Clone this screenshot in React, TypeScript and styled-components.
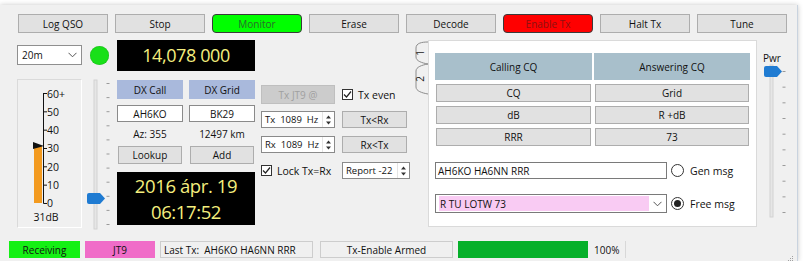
import React from "react";
import styled, { createGlobalStyle } from "styled-components";

const GlobalStyle = createGlobalStyle`
  html, body { margin: 0; padding: 0; background: #ffffff; }
  body {
    font-family: "Open Sans", "Noto Sans", sans-serif;
    font-size: 10px;
    color: #111;
  }
  * { box-sizing: border-box; }
`;

const Window = styled.div`
  position: relative;
  margin-top: 5px;
  width: 798px;
  height: 256px;
  background: #f0f0f0;
  border-right: 1px solid #c9d3df;
  box-shadow: 0 0 5px rgba(0, 0, 0, 0.22);
  display: flex;
  flex-direction: column;
`;

const Toolbar = styled.div`
  display: flex;
  gap: 7px;
  padding: 9px 0 0 18px;
`;

type Tone = "green" | "red";

const PushButton = styled.div<{ $tone?: Tone; $w?: number; $h?: number }>`
  width: ${(p) => p.$w ?? 90}px;
  height: ${(p) => p.$h ?? 19}px;
  display: flex;
  align-items: center;
  justify-content: center;
  background: ${(p) =>
    p.$tone === "green" ? "#00ff00" : p.$tone === "red" ? "#ff0000" : "#e1e1e1"};
  color: ${(p) =>
    p.$tone === "green" ? "#2b6b2b" : p.$tone === "red" ? "#8e1010" : "#111"};
  border: 1px solid ${(p) => (p.$tone ? "#3a3a3a" : "#adadad")};
  border-radius: ${(p) => (p.$tone ? "4px" : "0")};
  white-space: nowrap;
`;

const DisabledButton = styled(PushButton)`
  background: #cccccc;
  border-color: #bfbfbf;
  color: #a0a0a0;
`;

const Main = styled.div`
  display: flex;
  margin-top: 7px;
  height: 190px;
`;

/* left: band + meter */
const ColA = styled.div`
  margin-left: 17px;
  width: 93px;
  display: flex;
  flex-direction: column;
`;

const TopRow = styled.div`
  display: flex;
  align-items: center;
  gap: 8px;
  margin-top: 5px;
  height: 20px;
`;

const Combo = styled.div<{ $w: number; $h: number; $edge?: string }>`
  width: ${(p) => p.$w}px;
  height: ${(p) => p.$h}px;
  display: flex;
  align-items: center;
  background: #fff;
  border: 1px solid ${(p) => p.$edge ?? "#8f8f8f"};
  padding-left: 3px;
`;

const ComboText = styled.div<{ $bg?: string }>`
  flex: 1;
  align-self: stretch;
  display: flex;
  align-items: center;
  padding-left: 1px;
  margin: 1px 0;
  background: ${(p) => p.$bg ?? "transparent"};
`;

const ComboArrow = styled.div`
  width: 17px;
  display: flex;
  align-items: center;
  justify-content: center;
`;

const Led = styled.div`
  width: 19px;
  height: 19px;
  border-radius: 50%;
  background: #19e019;
  box-shadow: inset 0 0 1px #0a8a0a;
`;

const MeterRow = styled.div`
  display: flex;
  margin-top: 14px;
`;

const MeterBox = styled.div`
  width: 65px;
  height: 149px;
  border: 1px solid #dadada;
  border-right-color: #ffffff;
  border-bottom-color: #ffffff;
`;

/* DX column */
const ColB = styled.div`
  margin-left: 7px;
  width: 138px;
  display: flex;
  flex-direction: column;
`;

const Lcd = styled.div<{ $h: number; $size: number; $lh: number; $mt?: number }>`
  height: ${(p) => p.$h}px;
  margin-top: ${(p) => p.$mt ?? 0}px;
  background: #000;
  color: #f4ee7e;
  font-size: ${(p) => p.$size}px;
  letter-spacing: -0.4px;
  line-height: ${(p) => p.$lh}px;
  display: flex;
  flex-direction: column;
  align-items: center;
  justify-content: center;
`;

const PairRow = styled.div<{ $mt: number; $h: number }>`
  display: grid;
  grid-template-columns: 66px 66px;
  column-gap: 6px;
  margin-top: ${(p) => p.$mt}px;
  height: ${(p) => p.$h}px;
`;

const DxLabel = styled.div`
  background: #a9b9dc;
  display: flex;
  align-items: center;
  justify-content: center;
`;

const DxInput = styled.div`
  background: #fff;
  border: 1px solid #8a8a8a;
  display: flex;
  align-items: center;
  justify-content: center;
`;

const InfoText = styled.div`
  display: flex;
  align-items: center;
  justify-content: center;
`;

const ButtonPair = styled.div`
  display: flex;
  gap: 8px;
  padding-left: 1px;
`;

/* middle controls */
const ColC = styled.div`
  margin-left: 5px;
  width: 150px;
  padding: 45px 0 0 1px;
  display: flex;
  flex-direction: column;
`;

const CtlRow = styled.div<{ $mt: number }>`
  display: grid;
  grid-template-columns: 74px auto;
  column-gap: 7px;
  align-items: center;
  margin-top: ${(p) => p.$mt}px;
`;

const Check = styled.div`
  display: flex;
  align-items: center;
  gap: 5px;
  white-space: nowrap;
  font-size: 10.5px;
`;

const CheckBox = styled.div`
  width: 11px;
  height: 11px;
  background: #fff;
  border: 1px solid #333;
  display: flex;
  align-items: center;
  justify-content: center;
`;

const Spin = styled.div<{ $w: number; $h: number }>`
  width: ${(p) => p.$w}px;
  height: ${(p) => p.$h}px;
  background: #fff;
  border: 1px solid #8a8a8a;
  display: flex;
  align-items: center;
`;

const SpinText = styled.div`
  flex: 1;
  padding-left: 3px;
  font-size: 9.5px;
  white-space: pre;
`;

const SpinArrows = styled.div`
  width: 12px;
  height: 100%;
  display: flex;
  align-items: center;
  justify-content: center;
  border-left: 1px solid #e4e4e4;
`;

/* tab widget */
const TabStrip = styled.div`
  margin-left: 3px;
  width: 15px;
  padding-top: 1px;
`;

const Panel = styled.div`
  width: 329px;
  height: 187px;
  background: #fff;
  border: 1px solid #dadada;
  padding: 12px 0 0 6px;
`;

const MsgGrid = styled.div`
  display: grid;
  grid-template-columns: 157px 156px;
  column-gap: 2px;
  row-gap: 4px;
  grid-template-rows: 27px 18px 18px 18px;
`;

const MsgHeader = styled.div`
  background: #a8bfcb;
  display: flex;
  align-items: center;
  justify-content: center;
`;

const MsgButton = styled(PushButton)`
  width: auto;
  height: auto;
  margin: 0 1px;
`;

const FieldRow = styled.div<{ $mt: number }>`
  display: flex;
  align-items: center;
  margin-top: ${(p) => p.$mt}px;
`;

const LineEdit = styled.div`
  width: 232px;
  height: 17px;
  background: #fff;
  border: 1px solid #7a7a7a;
  display: flex;
  align-items: center;
  padding-left: 2px;
`;

const Radio = styled.div`
  margin-left: 4px;
  display: flex;
  align-items: center;
  gap: 6px;
  font-size: 10.5px;
`;

const RadioCircle = styled.div<{ $on?: boolean }>`
  width: 13px;
  height: 13px;
  border-radius: 50%;
  border: 1px solid #333;
  background: #fff;
  display: flex;
  align-items: center;
  justify-content: center;
  &::after {
    content: "";
    display: ${(p) => (p.$on ? "block" : "none")};
    width: 7px;
    height: 7px;
    border-radius: 50%;
    background: #222;
  }
`;

const PwrCol = styled.div`
  margin-left: 1px;
  width: 38px;
  display: flex;
  flex-direction: column;
`;

const PwrLabel = styled.div`
  margin: 11px 0 0 5px;
  height: 13px;
`;

/* status bar */
const StatusBar = styled.div`
  display: flex;
  align-items: stretch;
  margin-top: 11px;
  height: 17px;
  padding-left: 9px;
`;

const StatusCell = styled.div<{
  $w: number;
  $bg?: string;
  $ml?: number;
  $framed?: boolean;
  $left?: boolean;
}>`
  width: ${(p) => p.$w}px;
  margin-left: ${(p) => p.$ml ?? 0}px;
  background: ${(p) => p.$bg ?? "transparent"};
  border: ${(p) => (p.$framed ? "1px solid #cdcdcd" : "none")};
  display: flex;
  align-items: center;
  justify-content: ${(p) => (p.$left ? "flex-start" : "center")};
  padding-left: ${(p) => (p.$left ? "3px" : "0")};
  white-space: pre;
`;

const Separator = styled.div`
  width: 1px;
  margin-left: 4px;
  background: #d8d8d8;
`;

const SizeGrip = styled.div`
  position: absolute;
  right: 3px;
  bottom: 2px;
  width: 8px;
  height: 8px;
`;

const Chevron = () => (
  <svg width="9" height="6" viewBox="0 0 9 6">
    <polyline points="0.5,0.8 4.5,4.8 8.5,0.8" fill="none" stroke="#555" strokeWidth="1" />
  </svg>
);

const Tick = () => (
  <svg width="9" height="9" viewBox="0 0 9 9">
    <polyline points="1,4.5 3.5,7 8,1.5" fill="none" stroke="#222" strokeWidth="1.2" />
  </svg>
);

const SpinIcon = () => (
  <svg width="7" height="12" viewBox="0 0 7 12">
    <polygon points="3.5,1.5 6,4.5 1,4.5" fill="#333" />
    <polygon points="1,7.5 6,7.5 3.5,10.5" fill="#333" />
  </svg>
);

type SliderProps = {
  height: number;
  width: number;
  grooveX: number;
  ticks: number;
  tickTop: number;
  tickStep: number;
  thumbY: number;
  thumbX: number;
};

const VSlider = ({ height, width, grooveX, ticks, tickTop, tickStep, thumbY, thumbX }: SliderProps) => {
  const tickX = grooveX + 11;
  return (
    <svg width={width} height={height} viewBox={`0 0 ${width} ${height}`}>
      <rect x={grooveX - 1.5} y={1} width={3} height={height - 2} fill="#e6e6e6" stroke="#d2d2d2" strokeWidth="1" />
      {Array.from({ length: ticks }).map((_, i) => (
        <line
          key={i}
          x1={tickX}
          x2={tickX + 3}
          y1={tickTop + i * tickStep}
          y2={tickTop + i * tickStep}
          stroke="#9a9a9a"
          strokeWidth="1"
        />
      ))}
      <path
        d={`M${thumbX + 2},${thumbY} h11 l5,5.5 l-5,5.5 h-11 q-2,0 -2,-2 v-7 q0,-2 2,-2 z`}
        fill="#1f7bd2"
      />
    </svg>
  );
};

const Meter = () => {
  const labels = ["60+", "50", "40", "30", "20", "10", "0"];
  const top = 13;
  const step = 18.33;
  return (
    <svg width="63" height="147" viewBox="0 0 63 147">
      <rect x="16" y="66" width="8" height="57" fill="#f39a1f" />
      <line x1="25.5" y1={top} x2="25.5" y2="123.5" stroke="#111" strokeWidth="1" />
      {labels.map((l, i) => (
        <g key={l}>
          <line x1="25.5" x2="29" y1={top + i * step + 0.5} y2={top + i * step + 0.5} stroke="#111" strokeWidth="1" />
          <text x="29" y={top + i * step + 4.5} fontSize="10.5" fontFamily="Open Sans, sans-serif" fill="#111">
            {l}
          </text>
        </g>
      ))}
      <polygon points="15,62 26,66 15,69" fill="#111" />
      <text x="28" y="141" fontSize="10.5" textAnchor="middle" fontFamily="Open Sans, sans-serif" fill="#111">
        31dB
      </text>
    </svg>
  );
};

const Tabs = () => (
  <svg width="15" height="54" viewBox="0 0 15 54">
    <path
      d="M15,1 C9,1 3,2 3,7 V16 C3,20 9,22 15,23 C9,24 3,26 3,30 V46 C3,50 9,52 15,53"
      fill="#f0f0f0"
      stroke="#8c8c8c"
      strokeWidth="1"
    />
    <text x="0" y="0" transform="translate(10.5 12) rotate(-90)" fontSize="10" textAnchor="middle" fontFamily="Open Sans, sans-serif" fill="#222">
      1
    </text>
    <text x="0" y="0" transform="translate(10.5 38) rotate(-90)" fontSize="10" textAnchor="middle" fontFamily="Open Sans, sans-serif" fill="#222">
      2
    </text>
  </svg>
);

const toolbar: { label: string; tone?: Tone }[] = [
  { label: "Log QSO" },
  { label: "Stop" },
  { label: "Monitor", tone: "green" },
  { label: "Erase" },
  { label: "Decode" },
  { label: "Enable Tx", tone: "red" },
  { label: "Halt Tx" },
  { label: "Tune" },
];

const messages = [
  ["CQ", "Grid"],
  ["dB", "R +dB"],
  ["RRR", "73"],
];

export default function App() {
  return (
    <>
      <GlobalStyle />
      <Window>
        <Toolbar>
          {toolbar.map((b) => (
            <PushButton key={b.label} $tone={b.tone}>
              {b.label}
            </PushButton>
          ))}
        </Toolbar>

        <Main>
          <ColA>
            <TopRow>
              <Combo $w={65} $h={20}>
                <ComboText>20m</ComboText>
                <ComboArrow>
                  <Chevron />
                </ComboArrow>
              </Combo>
              <Led />
            </TopRow>
            <MeterRow>
              <MeterBox>
                <Meter />
              </MeterBox>
              <VSlider width={28} height={151} grooveX={13.5} ticks={11} tickTop={4.5} tickStep={14.1} thumbY={114} thumbX={5} />
            </MeterRow>
          </ColA>

          <ColB>
            <Lcd $h={31} $size={18} $lh={25}>
              14,078 000
            </Lcd>
            <PairRow $mt={9} $h={19}>
              <DxLabel>DX Call</DxLabel>
              <DxLabel>DX Grid</DxLabel>
            </PairRow>
            <PairRow $mt={6} $h={17}>
              <DxInput>AH6KO</DxInput>
              <DxInput>BK29</DxInput>
            </PairRow>
            <PairRow $mt={0} $h={24}>
              <InfoText>Az: 355</InfoText>
              <InfoText>12497 km</InfoText>
            </PairRow>
            <ButtonPair>
              <PushButton $w={64} $h={18}>
                Lookup
              </PushButton>
              <PushButton $w={64} $h={18}>
                Add
              </PushButton>
            </ButtonPair>
            <Lcd $h={53} $size={18.5} $lh={25.5} $mt={8}>
              <div>2016 ápr. 19</div>
              <div>06:17:52</div>
            </Lcd>
          </ColB>

          <ColC>
            <CtlRow $mt={0}>
              <DisabledButton $w={74} $h={19}>
                Tx JT9 @
              </DisabledButton>
              <Check>
                <CheckBox>
                  <Tick />
                </CheckBox>
                Tx even
              </Check>
            </CtlRow>
            <CtlRow $mt={7}>
              <Spin $w={74} $h={17}>
                <SpinText>{"Tx  1089  Hz"}</SpinText>
                <SpinArrows>
                  <SpinIcon />
                </SpinArrows>
              </Spin>
              <PushButton $w={65} $h={17}>
                Tx&lt;Rx
              </PushButton>
            </CtlRow>
            <CtlRow $mt={8}>
              <Spin $w={74} $h={17}>
                <SpinText>{"Rx  1089  Hz"}</SpinText>
                <SpinArrows>
                  <SpinIcon />
                </SpinArrows>
              </Spin>
              <PushButton $w={65} $h={17}>
                Rx&lt;Tx
              </PushButton>
            </CtlRow>
            <CtlRow $mt={9}>
              <Check>
                <CheckBox>
                  <Tick />
                </CheckBox>
                Lock Tx=Rx
              </Check>
              <Spin $w={68} $h={17}>
                <SpinText>{"Report -22"}</SpinText>
                <SpinArrows>
                  <SpinIcon />
                </SpinArrows>
              </Spin>
            </CtlRow>
          </ColC>

          <TabStrip>
            <Tabs />
          </TabStrip>

          <Panel>
            <MsgGrid>
              <MsgHeader>Calling CQ</MsgHeader>
              <MsgHeader>Answering CQ</MsgHeader>
              {messages.map(([a, b]) => (
                <React.Fragment key={a}>
                  <MsgButton>{a}</MsgButton>
                  <MsgButton>{b}</MsgButton>
                </React.Fragment>
              ))}
            </MsgGrid>
            <FieldRow $mt={16}>
              <LineEdit>AH6KO HA6NN RRR</LineEdit>
              <Radio>
                <RadioCircle />
                Gen msg
              </Radio>
            </FieldRow>
            <FieldRow $mt={15}>
              <Combo $w={232} $h={19} $edge="#7a7a7a">
                <ComboText $bg="#f9cbf3">R TU LOTW 73</ComboText>
                <ComboArrow>
                  <Chevron />
                </ComboArrow>
              </Combo>
              <Radio>
                <RadioCircle $on />
                Free msg
              </Radio>
            </FieldRow>
          </Panel>

          <PwrCol>
            <PwrLabel>Pwr</PwrLabel>
            <VSlider width={30} height={154} grooveX={13.5} ticks={10} tickTop={7.5} tickStep={15.67} thumbY={2} thumbX={6} />
          </PwrCol>
        </Main>

        <StatusBar>
          <StatusCell $w={71} $bg="#14f014">
            Receiving
          </StatusCell>
          <StatusCell $w={70} $ml={5} $bg="#f06cc8">
            JT9
          </StatusCell>
          <StatusCell $w={153} $ml={5} $framed $left>
            {"Last Tx:  AH6KO HA6NN RRR"}
          </StatusCell>
          <StatusCell $w={133} $ml={7} $framed>
            Tx-Enable Armed
          </StatusCell>
          <StatusCell $w={130} $ml={5} $bg="#06b02a" />
          <StatusCell $w={30} $ml={3} $left>
            100%
          </StatusCell>
          <Separator />
        </StatusBar>

        <SizeGrip>
          <svg width="8" height="8" viewBox="0 0 8 8">
            <rect x="6" y="2" width="1" height="1" fill="#a0a0a0" />
            <rect x="4" y="4" width="1" height="1" fill="#a0a0a0" />
            <rect x="6" y="4" width="1" height="1" fill="#a0a0a0" />
            <rect x="2" y="6" width="1" height="1" fill="#a0a0a0" />
            <rect x="4" y="6" width="1" height="1" fill="#a0a0a0" />
            <rect x="6" y="6" width="1" height="1" fill="#a0a0a0" />
          </svg>
        </SizeGrip>
      </Window>
    </>
  );
}
